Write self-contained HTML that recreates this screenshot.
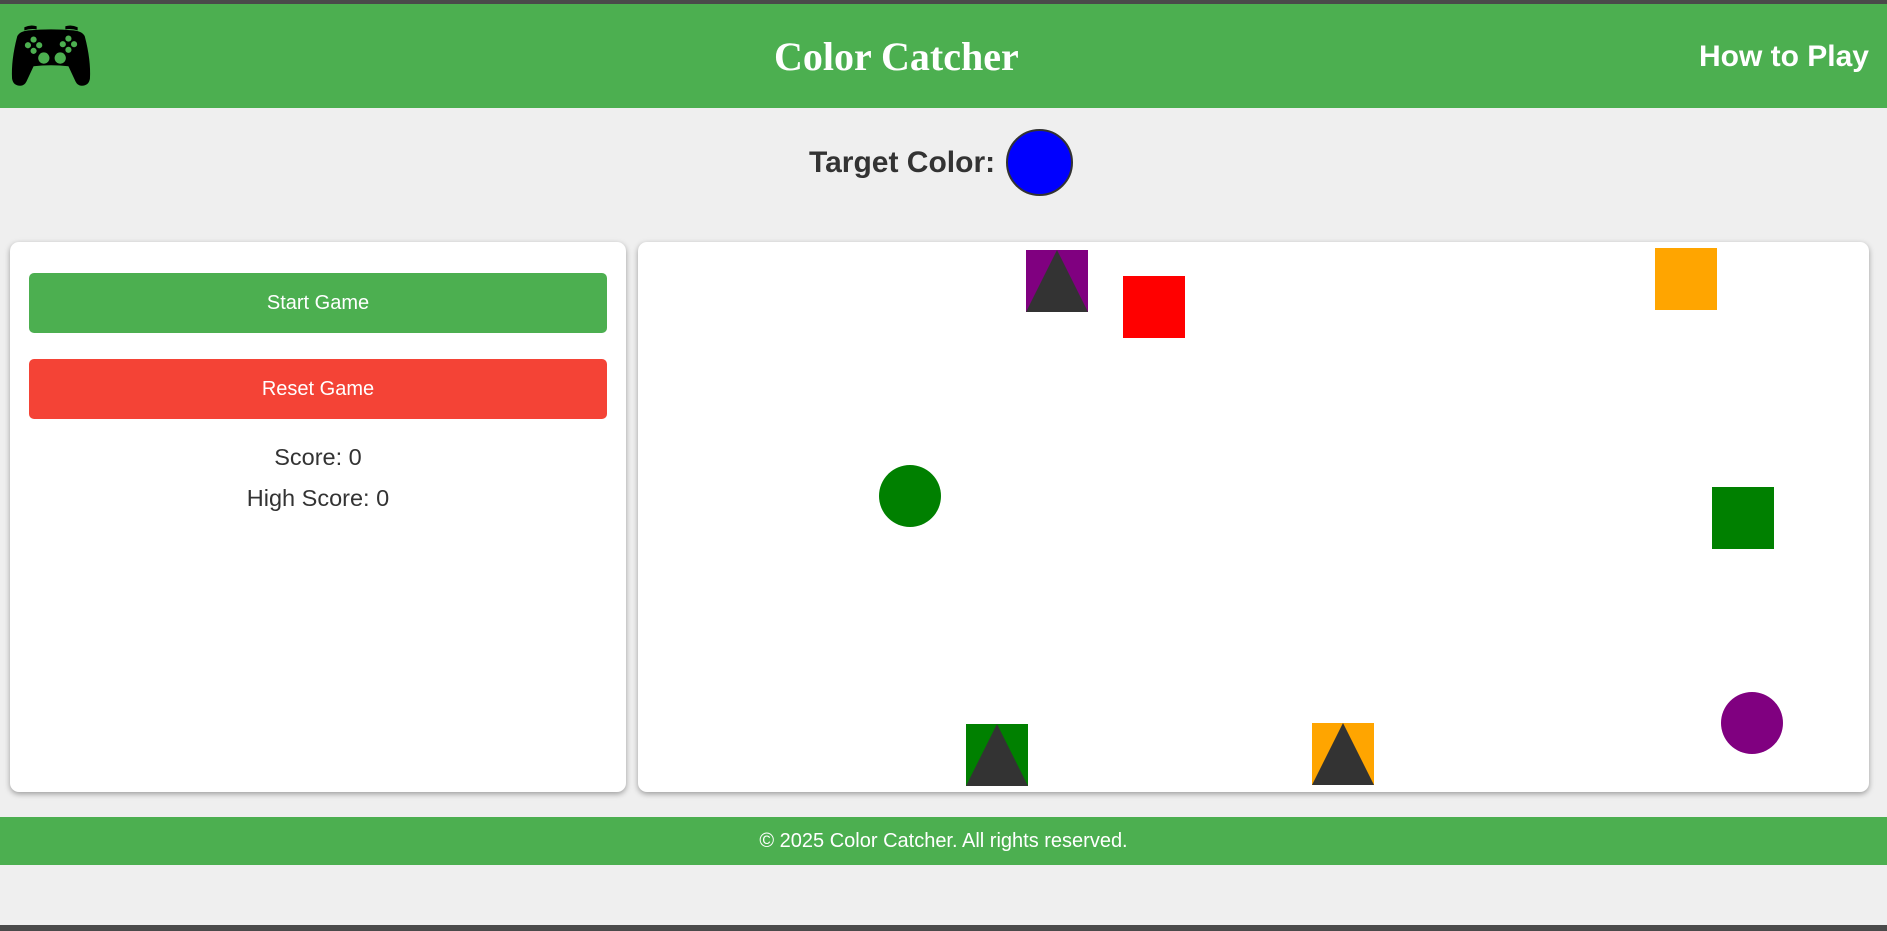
<!DOCTYPE html>
<html><head><meta charset="utf-8"><style>
*{margin:0;padding:0;box-sizing:border-box}
body{width:1887px;height:931px;background:#efefef;position:relative;overflow:hidden;font-family:"Liberation Sans",Arial,sans-serif}
.a{position:absolute}
#top{left:0;top:0;width:1887px;height:4px;background:#4a4a4a}
#hdr{left:0;top:4px;width:1887px;height:104px;background:#4caf50}
#title{left:774px;top:33px;white-space:nowrap;font-family:"Liberation Serif",serif;font-weight:bold;font-size:40px;color:#fff}
#how{right:18px;top:40px;font-weight:bold;font-size:30px;color:#fff}
#tgt{left:809px;top:146px;font-weight:bold;font-size:30px;color:#333}
#circ{left:1006px;top:129px;width:67px;height:67px;border-radius:50%;background:#00f;border:2px solid #333}
.panel{background:#fff;border-radius:9px;box-shadow:0 2px 6px rgba(0,0,0,.35);top:242px;height:550px}
.btn{left:29px;width:578px;height:60px;border-radius:5px;color:#fff;font-size:20px;text-align:center;line-height:60px}
.t{left:10px;width:616px;text-align:center;font-size:23.5px;color:#333}
.sq{width:62px;height:62px}
.tri{width:0;height:0;border-left:31px solid transparent;border-right:31px solid transparent;border-bottom:62px solid #333}
.ci{width:62px;height:62px;border-radius:50%}
#ftr{left:0;top:817px;width:1887px;height:48px;background:#4caf50;color:#fff;text-align:center;line-height:48px;font-size:20px}
#bot{left:0;top:925px;width:1887px;height:6px;background:#4a4a4a}
</style></head><body>
<div class="a" id="top"></div>
<div class="a" id="hdr"></div>
<svg class="a" style="left:10px;top:24px" width="82" height="64" viewBox="0 0 80 62">
<path d="M14 3 Q20 0 26 2 L26 5 Q20 4 14 6Z M54 2 Q60 0 66 3 L66 6 Q60 4 54 5Z" fill="#000"/>
<path d="M7 12 Q9 7 18 6 Q40 4 62 6 Q71 7 73 12 Q79 35 78 53 Q77 60 70 60 Q66 60 64 56 L57 41 Q40 39 23 41 L16 56 Q14 60 10 60 Q3 60 2 53 Q1 35 7 12Z" fill="#000"/>
<g fill="#4caf50"><circle cx="23" cy="15" r="3"/><circle cx="23" cy="26" r="3"/><circle cx="17.5" cy="20.5" r="3"/><circle cx="28.5" cy="20.5" r="3"/>
<circle cx="57" cy="14" r="3"/><circle cx="57" cy="25" r="3"/><circle cx="51.5" cy="19.5" r="3"/><circle cx="62.5" cy="19.5" r="3"/>
<circle cx="33" cy="33" r="5.5"/><circle cx="49" cy="33" r="5.5"/></g></svg>
<div class="a" id="title">Color Catcher</div>
<div class="a" id="how">How to Play</div>
<div class="a" id="tgt">Target Color:</div>
<div class="a" id="circ"></div>
<div class="a panel" style="left:10px;width:616px"></div>
<div class="a panel" style="left:638px;width:1231px"></div>
<div class="a btn" style="top:273px;background:#4caf50">Start Game</div>
<div class="a btn" style="top:359px;background:#f44336">Reset Game</div>
<div class="a t" style="top:444px">Score: 0</div>
<div class="a t" style="top:485px">High Score: 0</div>
<div class="a sq" style="left:1026px;top:250px;background:#800080"><div class="tri"></div></div>
<div class="a sq" style="left:1123px;top:276px;background:#f00"></div>
<div class="a sq" style="left:1655px;top:248px;background:#ffa500"></div>
<div class="a ci" style="left:879px;top:465px;background:#008000"></div>
<div class="a sq" style="left:1712px;top:487px;background:#008000"></div>
<div class="a ci" style="left:1721px;top:692px;background:#800080"></div>
<div class="a sq" style="left:966px;top:724px;background:#008000"><div class="tri"></div></div>
<div class="a sq" style="left:1312px;top:723px;background:#ffa500"><div class="tri"></div></div>
<div class="a" id="ftr">© 2025 Color Catcher. All rights reserved.</div>
<div class="a" id="bot"></div>
</body></html>
